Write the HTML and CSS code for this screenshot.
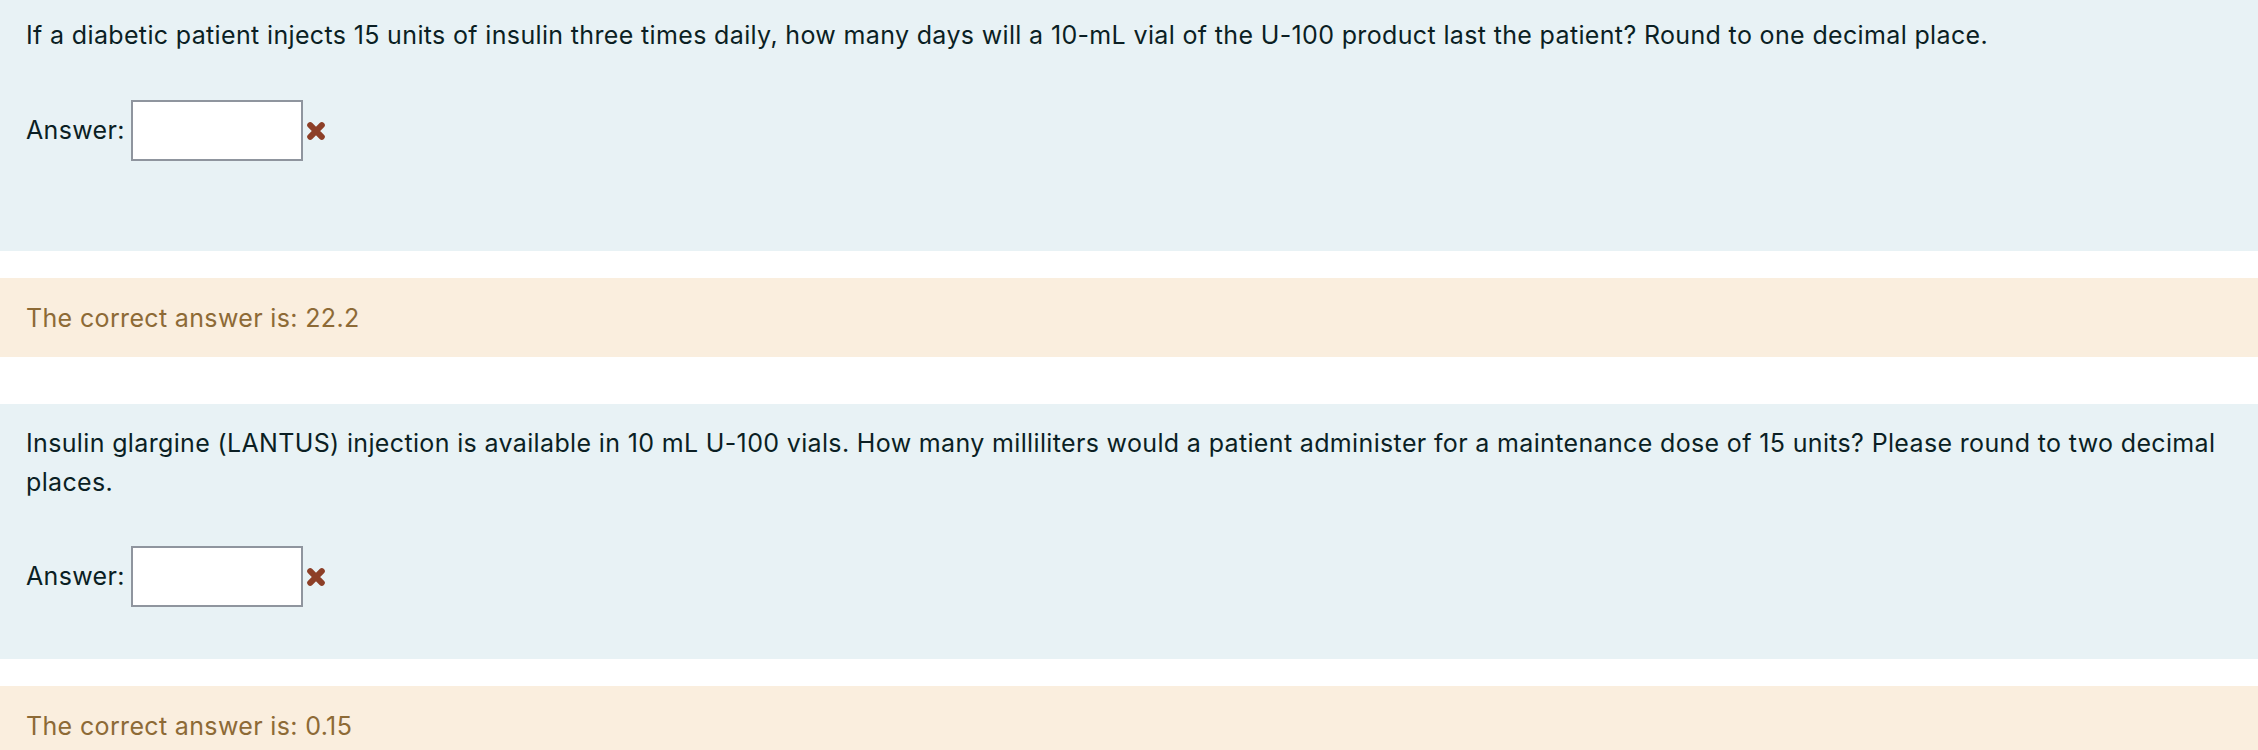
FILE: index.html
```html
<!DOCTYPE html>
<html>
<head>
<meta charset="utf-8">
<link rel="stylesheet" href="styles.css">
</head>
<body>
<div class="page">
  <section class="formulation first">
    <div class="qtext">If a diabetic patient injects 15 units of insulin three times daily, how many days will a 10-mL vial of the U-100 product last the patient? Round to one decimal place.</div>
    <div class="ablock">
      <label class="alabel">Answer:</label>
      <span class="answer-input"></span>
      <svg class="xmark" width="18" height="18" viewBox="0 0 18 18"><path d="M3.2 3.2 L14.8 14.8 M14.8 3.2 L3.2 14.8" stroke="#8d3f27" stroke-width="6" stroke-linecap="round" fill="none"/></svg>
    </div>
  </section>
  <section class="outcome gap-small">The correct answer is: 22.2</section>

  <section class="formulation second">
    <div class="qtext">Insulin glargine (LANTUS) injection is available in 10 mL U-100 vials. How many milliliters would a patient administer for a maintenance dose of 15 units? Please round to two decimal places.</div>
    <div class="ablock">
      <label class="alabel">Answer:</label>
      <span class="answer-input"></span>
      <svg class="xmark" width="18" height="18" viewBox="0 0 18 18"><path d="M3.2 3.2 L14.8 14.8 M14.8 3.2 L3.2 14.8" stroke="#8d3f27" stroke-width="6" stroke-linecap="round" fill="none"/></svg>
    </div>
  </section>
  <section class="outcome gap-small">The correct answer is: 0.15</section>
</div>
</body>
</html>
```

FILE: styles.css
```css
html, body {
  margin: 0;
  padding: 0;
  background: #ffffff;
}
body {
  font-family: Inter, "Noto Sans", "Liberation Sans", sans-serif;
  font-size: 25px;
  letter-spacing: 0.35px;
  line-height: 39px;
  color: #0b1f24;
  overflow: hidden;
}
.page {
  display: flex;
  flex-direction: column;
}
.formulation {
  background: #e8f2f5;
  padding: 20px 26px 52px 26px;
}
.formulation.first {
  padding-top: 16px;
  padding-bottom: 90px;
}
.formulation.second {
  margin-top: 47px;
}
.ablock {
  display: flex;
  align-items: center;
  margin-top: 45px;
}
.second .ablock {
  margin-top: 44px;
}
.alabel {
  margin-right: 6px;
}
.answer-input {
  display: block;
  width: 168px;
  height: 57px;
  background: #ffffff;
  border: 2px solid #8f959e;
}
.xmark {
  margin-left: 4px;
  display: block;
}
.outcome {
  background: #faeede;
  color: #8d6a36;
  padding: 21px 26px 19px 26px;
}
.outcome.gap-small {
  margin-top: 27px;
}
```
